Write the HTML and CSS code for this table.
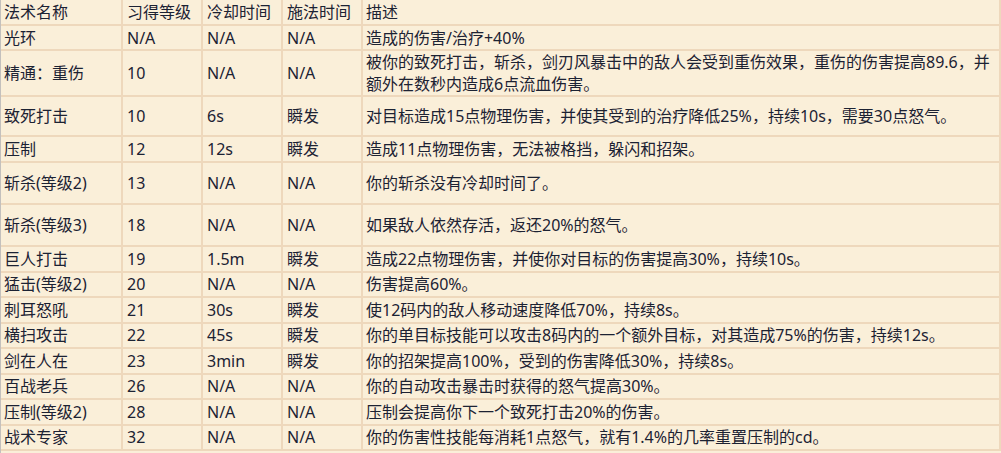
FILE: index.html
```html
<!DOCTYPE html>
<html lang="zh-CN">
<head>
<meta charset="utf-8">
<title>技能表</title>
<link rel="stylesheet" href="styles.css">
</head>
<body>
<div class="frame">
<table class="skills">
  <colgroup>
    <col class="c-name"><col class="c-lvl"><col class="c-cd"><col class="c-cast"><col class="c-desc">
  </colgroup>
  <thead>
    <tr class="r-head"><th>法术名称</th><th>习得等级</th><th>冷却时间</th><th>施法时间</th><th>描述</th></tr>
  </thead>
  <tbody>
    <tr class="r-23"><td>光环</td><td>N/A</td><td>N/A</td><td>N/A</td><td>造成的伤害/治疗+40%</td></tr>
    <tr class="r-44"><td>精通：重伤</td><td>10</td><td>N/A</td><td>N/A</td><td>被你的致死打击，斩杀，剑刃风暴击中的敌人会受到重伤效果，重伤的伤害提高89.6，并额外在数秒内造成6点流血伤害。</td></tr>
    <tr class="r-38"><td>致死打击</td><td>10</td><td>6s</td><td>瞬发</td><td>对目标造成15点物理伤害，并使其受到的治疗降低25%，持续10s，需要30点怒气。</td></tr>
    <tr class="r-24"><td>压制</td><td>12</td><td>12s</td><td>瞬发</td><td>造成11点物理伤害，无法被格挡，躲闪和招架。</td></tr>
    <tr class="r-40"><td>斩杀(等级2)</td><td>13</td><td>N/A</td><td>N/A</td><td>你的斩杀没有冷却时间了。</td></tr>
    <tr class="r-40"><td>斩杀(等级3)</td><td>18</td><td>N/A</td><td>N/A</td><td>如果敌人依然存活，返还20%的怒气。</td></tr>
    <tr><td>巨人打击</td><td>19</td><td>1.5m</td><td>瞬发</td><td>造成22点物理伤害，并使你对目标的伤害提高30%，持续10s。</td></tr>
    <tr><td>猛击(等级2)</td><td>20</td><td>N/A</td><td>N/A</td><td>伤害提高60%。</td></tr>
    <tr><td>刺耳怒吼</td><td>21</td><td>30s</td><td>瞬发</td><td>使12码内的敌人移动速度降低70%，持续8s。</td></tr>
    <tr><td>横扫攻击</td><td>22</td><td>45s</td><td>瞬发</td><td>你的单目标技能可以攻击8码内的一个额外目标，对其造成75%的伤害，持续12s。</td></tr>
    <tr><td>剑在人在</td><td>23</td><td>3min</td><td>瞬发</td><td>你的招架提高100%，受到的伤害降低30%，持续8s。</td></tr>
    <tr><td>百战老兵</td><td>26</td><td>N/A</td><td>N/A</td><td>你的自动攻击暴击时获得的怒气提高30%。</td></tr>
    <tr><td>压制(等级2)</td><td>28</td><td>N/A</td><td>N/A</td><td>压制会提高你下一个致死打击20%的伤害。</td></tr>
    <tr><td>战术专家</td><td>32</td><td>N/A</td><td>N/A</td><td>你的伤害性技能每消耗1点怒气，就有1.4%的几率重置压制的cd。</td></tr>
  </tbody>
</table>
</div>
</body>
</html>
```

FILE: styles.css
```css
html, body {
  margin: 0;
  padding: 0;
  background: #faefd9;
}

.frame {
  border-left: 1px solid #c3c0bd;
  overflow: hidden;
  height: 453px;
}

.skills {
  table-layout: fixed;
  width: 1002px;
  border-collapse: separate;
  border-spacing: 2px;
  background: #eed8bc;
  margin: -2px 0 0 -2px;
  font-family: "Noto Sans", "Noto Sans CJK SC", sans-serif;
  font-size: 16px;
  color: #1c2233;
}

.c-name { width: 120px; }
.c-lvl, .c-cd, .c-cast { width: 78px; }
.c-desc { width: 636px; }

.skills th,
.skills td {
  background: #faefd9;
  padding: 0 3px;
  line-height: 22px;
  height: 23.5px;
  text-align: left;
  font-weight: normal;
  vertical-align: middle;
  white-space: normal;
}

.skills tr > :not(:first-child) { padding-left: 4px; }
.skills tr > :last-child { padding-left: 3px; }

.r-head th { height: 24px; }
.r-23 td { height: 23px; }
.r-24 td { height: 24px; }
.r-38 td { height: 38px; }
.r-40 td { height: 40px; }
.r-44 td { height: 44px; }
```
